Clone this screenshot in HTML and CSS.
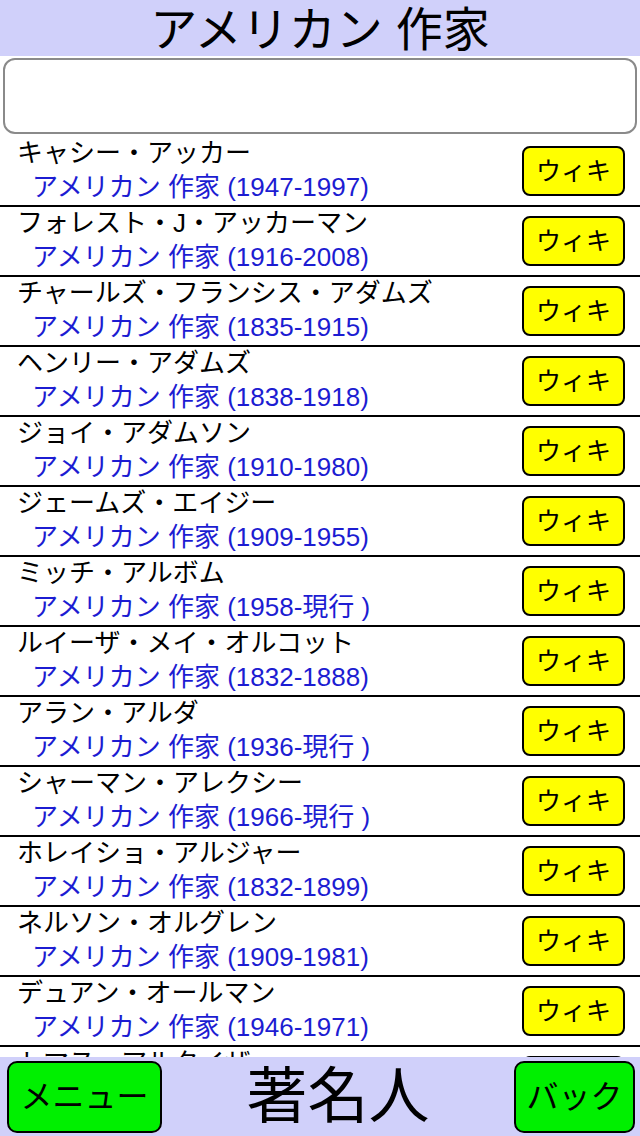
FILE: index.html
```html
<!DOCTYPE html>
<html lang="ja">
<head>
<meta charset="UTF-8">
<meta name="viewport" content="width=device-width, initial-scale=1.0">
<title>アメリカン 作家</title>
<link rel="stylesheet" href="styles.css">
</head>
<body>
<div class="screen">
  <div class="header">アメリカン 作家</div>
  <div class="search"></div>

  <div class="list">
    <div class="row">
      <div class="info">
        <div class="name">キャシー・アッカー</div>
        <div class="sub">アメリカン 作家 (1947-1997)</div>
      </div>
      <button class="wiki">ウィキ</button>
    </div>
    <div class="row">
      <div class="info">
        <div class="name">フォレスト・J・アッカーマン</div>
        <div class="sub">アメリカン 作家 (1916-2008)</div>
      </div>
      <button class="wiki">ウィキ</button>
    </div>
    <div class="row">
      <div class="info">
        <div class="name">チャールズ・フランシス・アダムズ</div>
        <div class="sub">アメリカン 作家 (1835-1915)</div>
      </div>
      <button class="wiki">ウィキ</button>
    </div>
    <div class="row">
      <div class="info">
        <div class="name">ヘンリー・アダムズ</div>
        <div class="sub">アメリカン 作家 (1838-1918)</div>
      </div>
      <button class="wiki">ウィキ</button>
    </div>
    <div class="row">
      <div class="info">
        <div class="name">ジョイ・アダムソン</div>
        <div class="sub">アメリカン 作家 (1910-1980)</div>
      </div>
      <button class="wiki">ウィキ</button>
    </div>
    <div class="row">
      <div class="info">
        <div class="name">ジェームズ・エイジー</div>
        <div class="sub">アメリカン 作家 (1909-1955)</div>
      </div>
      <button class="wiki">ウィキ</button>
    </div>
    <div class="row">
      <div class="info">
        <div class="name">ミッチ・アルボム</div>
        <div class="sub">アメリカン 作家 (1958-現行 )</div>
      </div>
      <button class="wiki">ウィキ</button>
    </div>
    <div class="row">
      <div class="info">
        <div class="name">ルイーザ・メイ・オルコット</div>
        <div class="sub">アメリカン 作家 (1832-1888)</div>
      </div>
      <button class="wiki">ウィキ</button>
    </div>
    <div class="row">
      <div class="info">
        <div class="name">アラン・アルダ</div>
        <div class="sub">アメリカン 作家 (1936-現行 )</div>
      </div>
      <button class="wiki">ウィキ</button>
    </div>
    <div class="row">
      <div class="info">
        <div class="name">シャーマン・アレクシー</div>
        <div class="sub">アメリカン 作家 (1966-現行 )</div>
      </div>
      <button class="wiki">ウィキ</button>
    </div>
    <div class="row">
      <div class="info">
        <div class="name">ホレイショ・アルジャー</div>
        <div class="sub">アメリカン 作家 (1832-1899)</div>
      </div>
      <button class="wiki">ウィキ</button>
    </div>
    <div class="row">
      <div class="info">
        <div class="name">ネルソン・オルグレン</div>
        <div class="sub">アメリカン 作家 (1909-1981)</div>
      </div>
      <button class="wiki">ウィキ</button>
    </div>
    <div class="row">
      <div class="info">
        <div class="name">デュアン・オールマン</div>
        <div class="sub">アメリカン 作家 (1946-1971)</div>
      </div>
      <button class="wiki">ウィキ</button>
    </div>
    <div class="row">
      <div class="info">
        <div class="name">トマス・アルタイザー</div>
        <div class="sub">アメリカン 作家 (1927-2018)</div>
      </div>
      <button class="wiki">ウィキ</button>
    </div>
  </div>

  <div class="footer">
    <button class="nav">メニュー</button>
    <div class="footer-title">著名人</div>
    <button class="nav back">バック</button>
  </div>
</div>
</body>
</html>
```

FILE: styles.css
```css
body {
  margin: 0;
  font-family: "Liberation Sans", "Noto Sans CJK JP", sans-serif;
  color: #000;
  background: #fff;
}

.screen {
  height: 1136px;
  display: flex;
  flex-direction: column;
  overflow: hidden;
}

.header {
  height: 56px;
  line-height: 60px;
  background-color: #d0d0fa;
  text-align: center;
  font-size: 47px;
  flex-shrink: 0;
  overflow: hidden;
}

.search {
  height: 72px;
  margin: 2px 3px 3px 3px;
  border: 2px solid #8a8a8a;
  border-radius: 12px;
  flex-shrink: 0;
}

.list {
  flex: 1;
  overflow: hidden;
}

.row {
  height: 68px;
  border-bottom: 2px solid #000;
  display: flex;
  align-items: center;
  justify-content: space-between;
  padding: 0 15px 0 17px;
}

.info {
  display: flex;
  flex-direction: column;
}

.name {
  font-size: 26px;
  line-height: 34px;
  margin-top: -3px;
  white-space: nowrap;
}

.sub {
  font-size: 26px;
  line-height: 34px;
  color: #1c1cd2;
  padding-left: 15px;
  white-space: nowrap;
}

.wiki {
  width: 103px;
  height: 50px;
  background-color: #ffff00;
  border: 2px solid #000;
  border-radius: 8px;
  font-family: inherit;
  font-size: 25px;
  line-height: 30px;
  color: #000;
  padding: 0;
}

.footer {
  height: 79px;
  background-color: #d0d0fa;
  display: flex;
  align-items: center;
  justify-content: space-between;
  padding: 0 5px 0 7px;
  flex-shrink: 0;
}

.nav {
  width: 155px;
  height: 72px;
  background-color: #00f000;
  border: 2px solid #000;
  border-radius: 10px;
  font-family: inherit;
  font-size: 32px;
  line-height: 40px;
  color: #000;
  padding: 0;
}

.nav.back {
  width: 121px;
}

.footer-title {
  font-size: 61px;
  line-height: 72px;
}
```
